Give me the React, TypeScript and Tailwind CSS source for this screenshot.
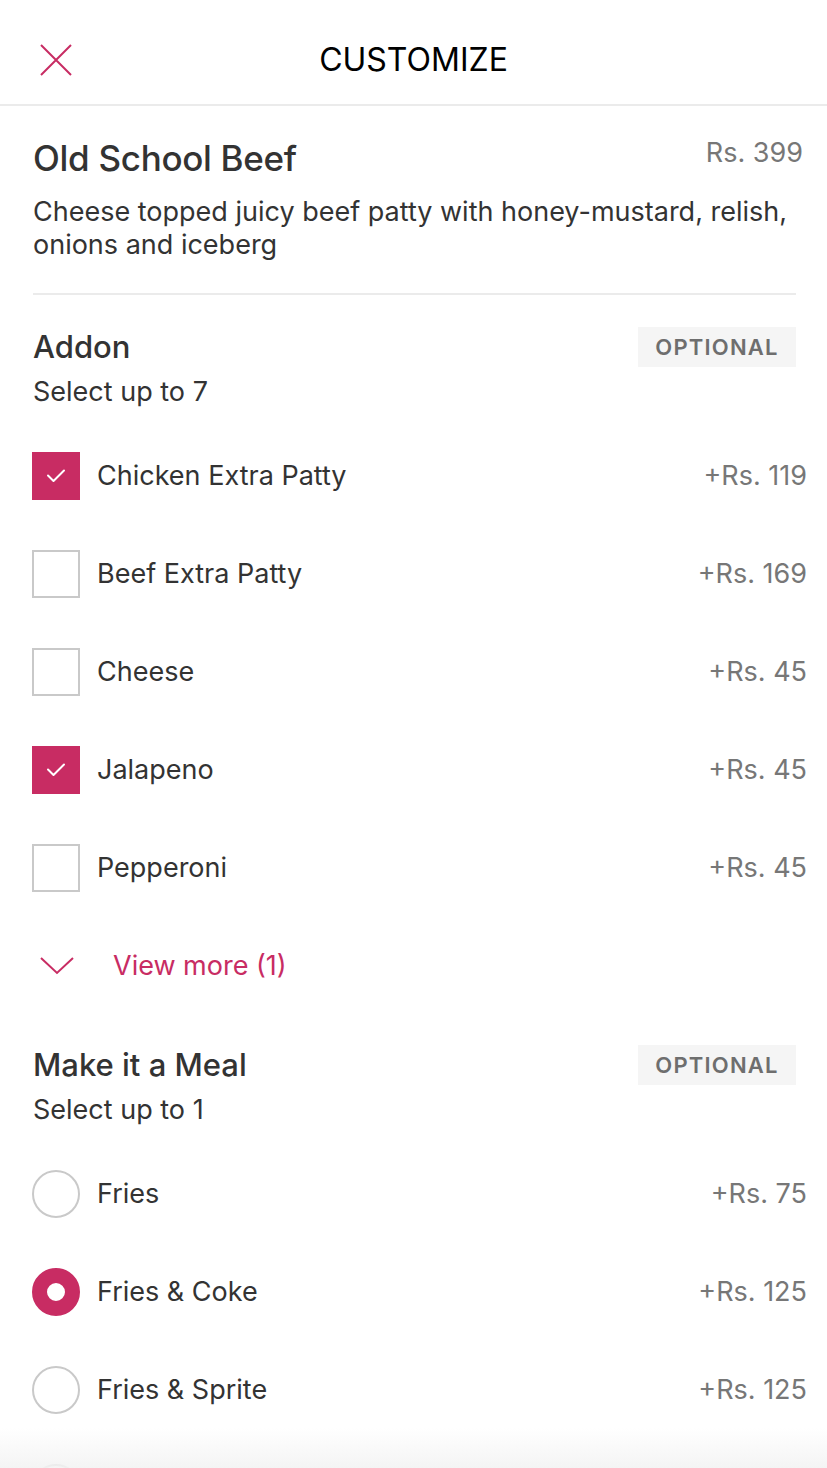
import React from "react";

const PINK = "#c82c63";

function Check({ checked }: { checked: boolean }) {
  if (checked) {
    return (
      <div className="-ml-[1px] w-[48px] h-[48px] bg-[#c82c63] flex items-center justify-center shrink-0">
        <svg width="20" height="16" viewBox="0 0 20 16" fill="none">
          <path d="M2 7.5 L7.5 13 L18 2.5" stroke="white" strokeWidth="2" strokeLinecap="round" strokeLinejoin="round" />
        </svg>
      </div>
    );
  }
  return <div className="-ml-[1px] w-[48px] h-[48px] border-2 border-[#c9c9c9] bg-white shrink-0" />;
}

function Radio({ checked }: { checked: boolean }) {
  if (checked) {
    return <div className="-ml-[1px] w-[48px] h-[48px] rounded-full border-[15px] border-[#c82c63] bg-white shrink-0" />;
  }
  return <div className="-ml-[1px] w-[48px] h-[48px] rounded-full border-2 border-[#c9c9c9] bg-white shrink-0" />;
}

function Row({ label, price, control }: { label: string; price: string; control: React.ReactNode }) {
  return (
    <div className="h-[98px] flex items-center -mr-[11px]">
      {control}
      <span className="ml-[17px] text-[27px] leading-[34px] text-[#333333] flex-1">{label}</span>
      <span className="text-[27px] leading-[34px] text-[#777777]">{price}</span>
    </div>
  );
}

function SectionHeader({ title, sub, top }: { title: string; sub: string; top: string }) {
  return (
    <div className={top}>
      <div className="h-[40px] flex items-center justify-between">
        <span className="text-[31px] leading-[40px] font-medium text-[#333333]">{title}</span>
        <span className="h-[40px] w-[158px] bg-[#f5f5f5] flex items-center justify-center text-[22px] font-semibold tracking-[1.2px] text-[#6e6e6e]">
          OPTIONAL
        </span>
      </div>
      <div className="mt-[8px] text-[27px] leading-[34px] text-[#333333]">{sub}</div>
      <div className="h-[18px]" />
    </div>
  );
}

export default function App() {
  const addons = [
    { label: "Chicken Extra Patty", price: "+Rs. 119", checked: true },
    { label: "Beef Extra Patty", price: "+Rs. 169", checked: false },
    { label: "Cheese", price: "+Rs. 45", checked: false },
    { label: "Jalapeno", price: "+Rs. 45", checked: true },
    { label: "Pepperoni", price: "+Rs. 45", checked: false },
  ];
  const meals = [
    { label: "Fries", price: "+Rs. 75", checked: false },
    { label: "Fries & Coke", price: "+Rs. 125", checked: true },
    { label: "Fries & Sprite", price: "+Rs. 125", checked: false },
  ];
  return (
    <div
      className="relative w-[827px] h-[1468px] overflow-hidden bg-white"
      style={{ fontFamily: "Inter, 'Noto Sans', sans-serif" }}
    >
      <header className="h-[106px] border-b-2 border-[#ebebeb] pt-[16px] grid grid-cols-[1fr_auto_1fr] items-center">
        <div className="pl-[40px] flex items-center">
          <svg width="32" height="32" viewBox="0 0 32 32" fill="none">
            <path d="M1 1 L31 31 M31 1 L1 31" stroke={PINK} strokeWidth="2" />
          </svg>
        </div>
        <h1 className="text-[32px] leading-[40px] text-black">CUSTOMIZE</h1>
        <div />
      </header>

      <main className="pl-[33px] pr-[31px]">
        <div className="pt-[32px] flex items-start justify-between">
          <h2 className="text-[35px] leading-[40px] font-medium text-[#333333] tracking-[-0.3px]">Old School Beef</h2>
          <span className="-mr-[7px] -mt-[2px] text-[27px] leading-[34px] text-[#777777]">Rs. 399</span>
        </div>
        <p className="mt-[17px] text-[27px] leading-[33px] text-[#333333]">
          Cheese topped juicy beef patty with honey-mustard, relish, onions and iceberg
        </p>
        <div className="mt-[32px] h-[2px] bg-[#ebebeb]" />

        <SectionHeader title="Addon" sub="Select up to 7" top="pt-[32px]" />
        {addons.map((a) => (
          <Row key={a.label} label={a.label} price={a.price} control={<Check checked={a.checked} />} />
        ))}
        <div className="h-[98px] flex items-center">
          <div className="w-[48px] flex justify-center">
            <svg width="34" height="18" viewBox="0 0 34 18" fill="none">
              <path d="M1 1 L17 16 L33 1" stroke={PINK} strokeWidth="2" />
            </svg>
          </div>
          <span className="ml-[32px] text-[27px] leading-[34px] text-[#c82c63]">View more (1)</span>
        </div>

        <SectionHeader title="Make it a Meal" sub="Select up to 1" top="pt-[30px]" />
        {meals.map((m) => (
          <Row key={m.label} label={m.label} price={m.price} control={<Radio checked={m.checked} />} />
        ))}
        <div className="h-[98px] flex items-center">
          <Radio checked={false} />
        </div>
      </main>

      <div className="pointer-events-none absolute left-0 right-0 bottom-0 h-[40px] bg-gradient-to-b from-[rgba(243,243,243,0)] to-[rgba(243,243,243,0.9)]" />
    </div>
  );
}
